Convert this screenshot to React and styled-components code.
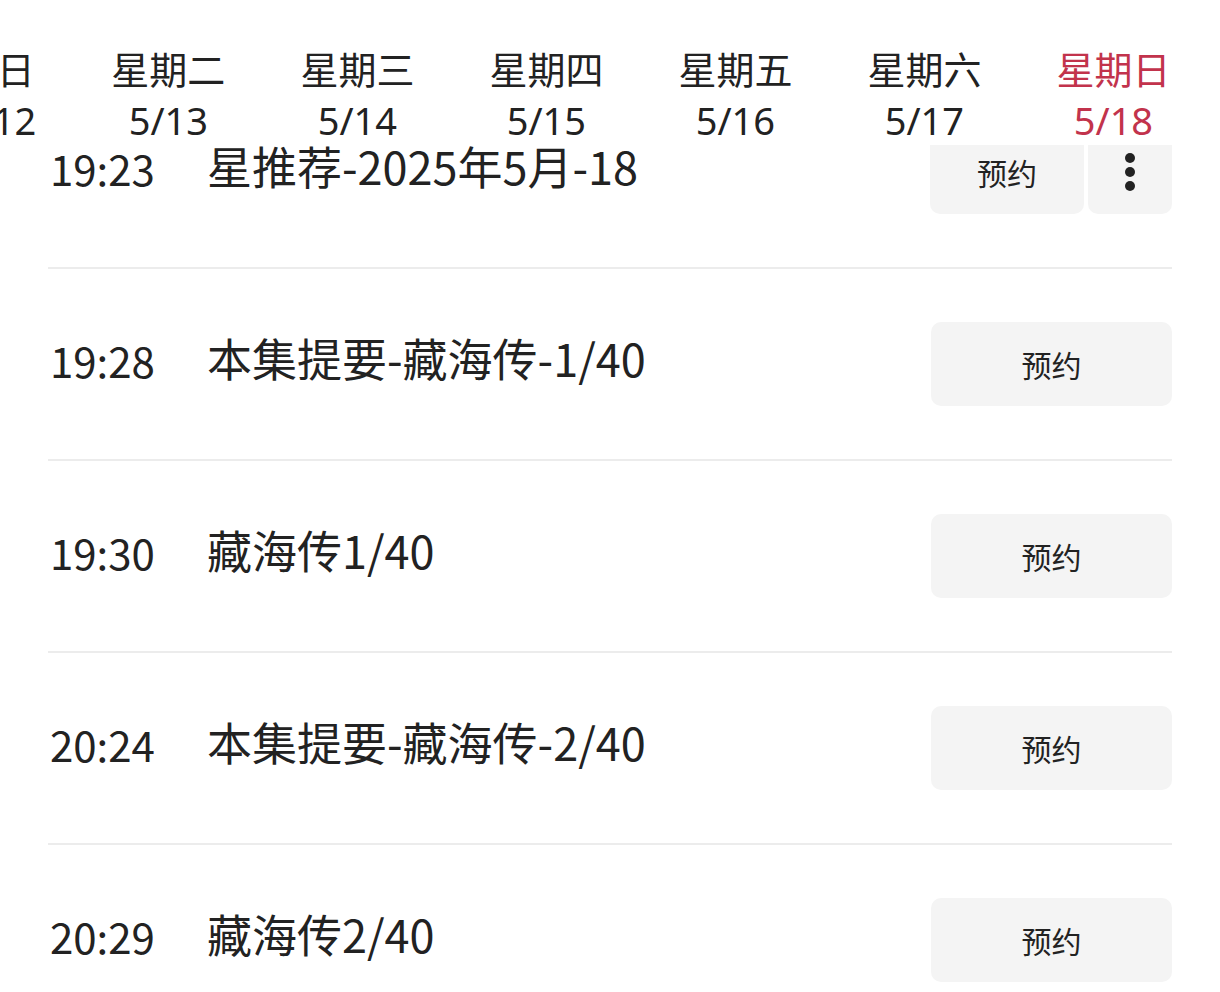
import React from "react";
import styled, { createGlobalStyle } from "styled-components";

const Global = createGlobalStyle`
  html, body { margin: 0; padding: 0; background: #fff; }
  body { font-family: "Noto Sans CJK SC", "Noto Sans", sans-serif; color: #222; }
`;

const Page = styled.div`
  position: relative;
  width: 1220px;
  height: 992px;
  overflow: hidden;
  background: #fff;
`;

const Header = styled.div`
  position: absolute;
  top: 0;
  left: 0;
  right: 0;
  height: 145px;
  background: #fff;
  z-index: 2;
  overflow: hidden;
`;

const DayStrip = styled.div`
  display: flex;
  gap: 75px;
  margin-left: -43px;
  padding-top: 42px;
`;

const DayCol = styled.div`
  flex: 0 0 auto;
  display: flex;
  flex-direction: column;
  align-items: center;
  color: ${(p) => (p.$active ? "#c2334c" : "#222")};
  font-size: 38px;
  line-height: 52px;
  white-space: nowrap;
`;

const DayName = styled.div``;
const DayDate = styled.div`
  font-family: "Noto Sans", "Noto Sans CJK SC", sans-serif;
`;

const List = styled.div`
  padding: 77px 48px 0 48px;
`;

const Row = styled.div`
  height: 190px;
  display: flex;
  align-items: center;
  padding-left: 2px;
  border-bottom: 2px solid #ececec;
  &:last-child { border-bottom: none; }
`;

const Time = styled.div`
  font-family: "Noto Sans CJK SC", "Noto Sans", sans-serif;
  font-size: 42px;
  width: 105px;
  white-space: nowrap;
  margin-right: 52px;
  margin-top: -10px;
`;

const Title = styled.div`
  font-size: 45px;
  white-space: nowrap;
  margin-top: -14px;
`;

const Actions = styled.div`
  margin-left: auto;
  display: flex;
  gap: 4px;
`;

const ReserveBtn = styled.button`
  width: ${(p) => (p.$narrow ? "154px" : "241px")};
  height: 84px;
  border: none;
  border-radius: 10px;
  background: #f4f4f4;
  color: #222;
  font-family: "Noto Sans CJK SC", sans-serif;
  font-size: 30px;
  padding: 0;
  display: flex;
  align-items: center;
  justify-content: center;
`;

const MoreBtn = styled.button`
  width: 84px;
  height: 84px;
  border: none;
  border-radius: 10px;
  background: #f4f4f4;
  padding: 0;
  display: flex;
  flex-direction: column;
  align-items: center;
  justify-content: center;
  gap: 4px;
`;

const Dot = styled.span`
  width: 10px;
  height: 10px;
  border-radius: 50%;
  background: #222;
`;

const days = [
  ["今日", "5/12"],
  ["星期二", "5/13"],
  ["星期三", "5/14"],
  ["星期四", "5/15"],
  ["星期五", "5/16"],
  ["星期六", "5/17"],
  ["星期日", "5/18", true],
];

const rows = [
  ["19:23", "星推荐-2025年5月-18", true],
  ["19:28", "本集提要-藏海传-1/40"],
  ["19:30", "藏海传1/40"],
  ["20:24", "本集提要-藏海传-2/40"],
  ["20:29", "藏海传2/40"],
];

export default function App() {
  return (
    <Page>
      <Global />
      <Header>
        <DayStrip>
          {days.map(([n, d, a]) => (
            <DayCol key={d} $active={a}>
              <DayName>{n}</DayName>
              <DayDate>{d}</DayDate>
            </DayCol>
          ))}
        </DayStrip>
      </Header>
      <List>
        {rows.map(([t, title, more]) => (
          <Row key={t}>
            <Time>{t}</Time>
            <Title>{title}</Title>
            <Actions>
              <ReserveBtn $narrow={more}>预约</ReserveBtn>
              {more && (
                <MoreBtn>
                  <Dot />
                  <Dot />
                  <Dot />
                </MoreBtn>
              )}
            </Actions>
          </Row>
        ))}
      </List>
    </Page>
  );
}
